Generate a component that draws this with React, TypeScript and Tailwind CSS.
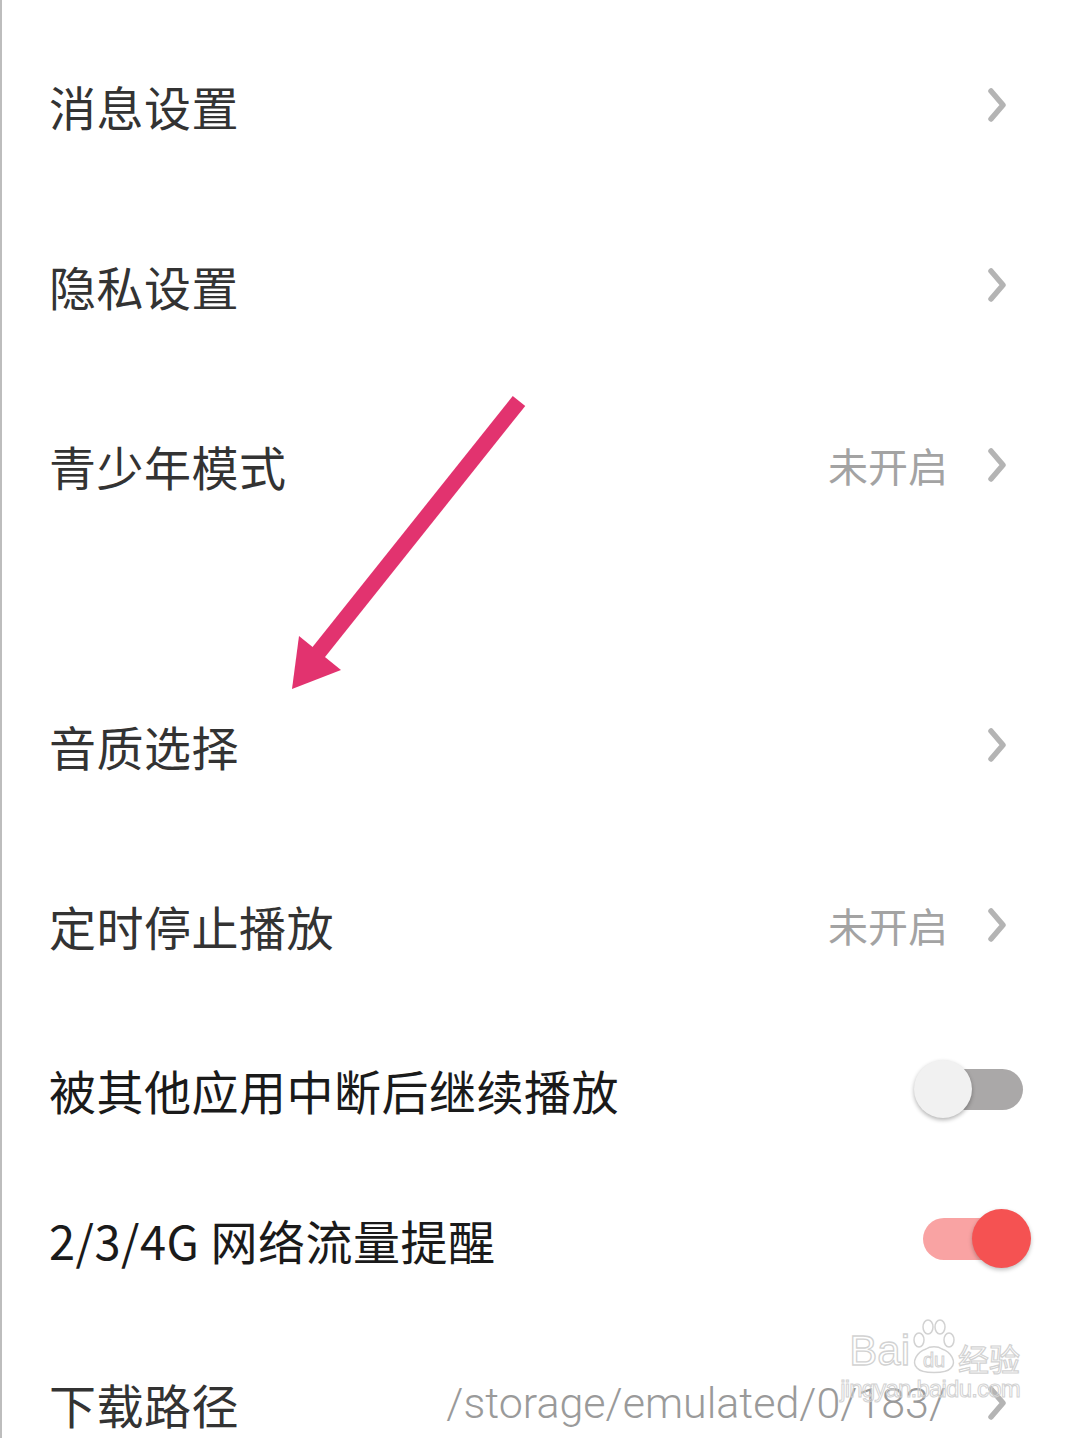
import React from "react";

const CJK = { fontFamily: '"Noto Sans CJK SC", "Noto Sans", sans-serif' };

function Chevron() {
  return (
    <svg width="22" height="34" viewBox="0 0 22 34" className="shrink-0">
      <path d="M5 3 L17 17 L5 31" fill="none" stroke="#b4b4b4" strokeWidth="5.5" strokeLinecap="round" strokeLinejoin="round" />
    </svg>
  );
}

function Row({ h, title, value, dark, right }: { h: string; title: string; value?: string; dark?: boolean; right?: React.ReactNode }) {
  return (
    <div className={`flex items-center pl-[47px] pr-[72px] ${h}`}>
      <div className={`flex-1 text-[47px] leading-none tracking-[0.5px] ${dark ? "text-[#1a1a1a]" : "text-[#333333]"}`} style={CJK}>
        {title}
      </div>
      {right ?? (
        <div className="flex items-center">
          {value && <span className="mr-[38px] text-[40px] leading-none text-[#a3a3a3]" style={CJK}>{value}</span>}
          <Chevron />
        </div>
      )}
    </div>
  );
}

function ToggleOff() {
  return (
    <div className="relative mr-[-16px] h-[60px] w-[110px]">
      <div className="absolute left-[20px] top-[10px] h-[41px] w-[89px] rounded-full bg-[#aaa8a8]" />
      <div className="absolute left-0 top-[1px] h-[58px] w-[58px] rounded-full bg-[#f1f1f1] shadow-[0_2px_4px_rgba(0,0,0,0.3)]" />
    </div>
  );
}

function ToggleOn() {
  return (
    <div className="relative mr-[-23px] h-[60px] w-[110px]">
      <div className="absolute left-[2px] top-[9px] h-[42px] w-[90px] rounded-full bg-[#f9a3a3]" />
      <div className="absolute left-[51px] top-[0px] h-[59px] w-[59px] rounded-full bg-[#f55252] shadow-[0_2px_4px_rgba(0,0,0,0.25)]" />
    </div>
  );
}

function Watermark() {
  return (
    <div className="pointer-events-none absolute right-[60px] top-[1318px] flex flex-col items-end">
      <div className="flex items-end">
        <span className="mb-[4px] text-[42px] leading-none text-transparent [-webkit-text-stroke:1.3px_#d2d2d2]" style={{ fontFamily: '"Liberation Sans", sans-serif' }}>Bai</span>
        <svg width="46" height="58" viewBox="0 0 46 58" className="mx-[1px]">
          <g fill="none" stroke="#d2d2d2" strokeWidth="1.5">
            <ellipse cx="8" cy="22" rx="5" ry="7" />
            <ellipse cx="17" cy="9" rx="5" ry="7" />
            <ellipse cx="29" cy="9" rx="5" ry="7" />
            <ellipse cx="38" cy="22" rx="5" ry="7" />
            <path d="M6 50 C0 44 6 34 15 31 C19 28 27 28 31 31 C40 34 46 44 40 50 C35 56 11 56 6 50 Z" />
          </g>
          <text x="23" y="49" textAnchor="middle" fontSize="20" fill="none" stroke="#d2d2d2" strokeWidth="1" fontFamily="Liberation Sans, sans-serif">du</text>
        </svg>
        <span className="mb-[3px] text-[31px] leading-none text-transparent [-webkit-text-stroke:1.2px_#d2d2d2]" style={CJK}>经验</span>
      </div>
      <span className="mt-[1px] text-[24px] leading-none tracking-[-0.8px] text-transparent [-webkit-text-stroke:1px_#d2d2d2]" style={{ fontFamily: '"Liberation Sans", sans-serif' }}>jingyan.baidu.com</span>
    </div>
  );
}

export default function App() {
  return (
    <div className="relative h-[1438px] w-[1080px] overflow-hidden border-l-2 border-[#bdbdbd] bg-white">
      <div className="flex flex-col pt-[15px]">
        <Row h="h-[180px]" title="消息设置" />
        <Row h="h-[180px]" title="隐私设置" />
        <Row h="h-[180px]" title="青少年模式" value="未开启" />
        <div className="h-[100px]" />
        <Row h="h-[180px]" title="音质选择" />
        <Row h="h-[180px]" title="定时停止播放" value="未开启" />
        <Row h="h-[148px]" title="被其他应用中断后继续播放" dark right={<ToggleOff />} />
        <Row h="h-[152px]" title="2/3/4G 网络流量提醒" dark right={<ToggleOn />} />
        <div className="flex h-[176px] items-center pl-[47px] pr-[72px]">
          <div className="flex-1 text-[47px] leading-none tracking-[0.5px] text-[#333333]" style={CJK}>下载路径</div>
          <span className="mr-[40px] text-[43px] font-light leading-none text-[#9a9a9a]" style={{ fontFamily: 'Roboto, "Noto Sans", sans-serif' }}>/storage/emulated/0/183/</span>
          <Chevron />
        </div>
      </div>

      <svg className="pointer-events-none absolute left-0 top-0" width="1080" height="1438" viewBox="0 0 1080 1438">
        <path d="M517 401 L316 653" stroke="#e2336f" strokeWidth="16" strokeLinecap="butt" fill="none" />
        <polygon points="290,689 297,636 339,670" fill="#e2336f" />
      </svg>

      <Watermark />
    </div>
  );
}
